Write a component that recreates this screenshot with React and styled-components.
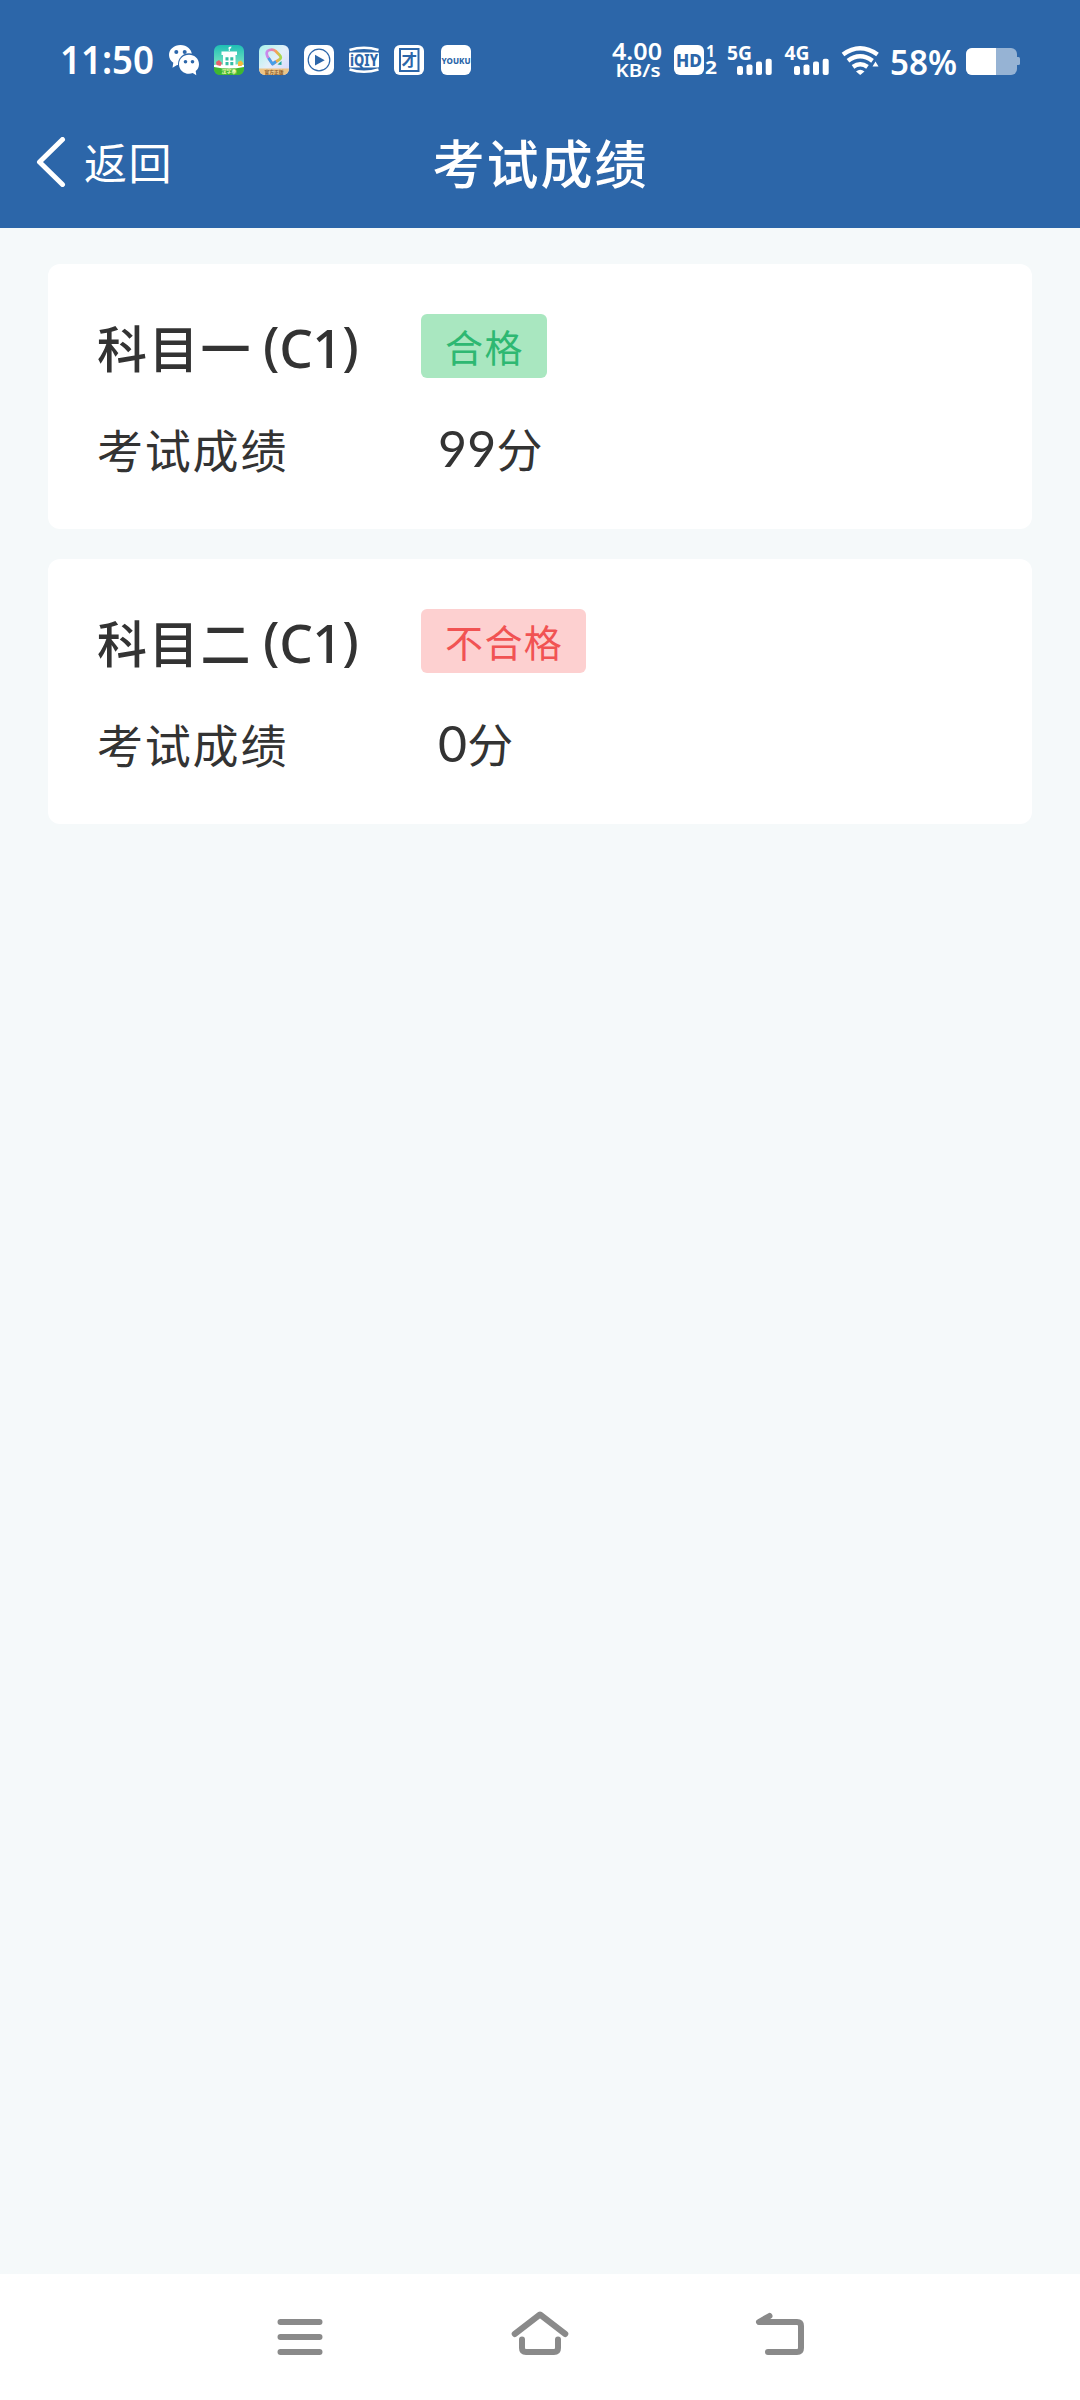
import React from 'react'
import styled, { createGlobalStyle } from 'styled-components'

const CJK = '"Noto Sans CJK SC", "Noto Sans", sans-serif'
const LATIN = '"Noto Sans", "Open Sans", sans-serif'

const GlobalStyle = createGlobalStyle`
  body {
    margin: 0;
    background: #f5f9fa;
    font-family: ${CJK};
  }
`

const Screen = styled.div`
  width: 1080px;
  height: 2400px;
  display: flex;
  flex-direction: column;
  background: #f5f9fa;
  overflow: hidden;
`

const Header = styled.header`
  height: 228px;
  background: #2c66a9;
  color: #fff;
`

const StatusBar = styled.div`
  height: 80px;
  padding: 40px 60px 0;
  box-sizing: border-box;
  display: flex;
  justify-content: space-between;
  align-items: flex-start;
`

const StatusSvg = styled.svg`
  display: block;
  height: 40px;
  width: ${props => props.$width}px;
  overflow: visible;
  font-family: ${LATIN};
  fill: #fff;
`

const TitleBar = styled.div`
  height: 148px;
  padding: 0 36px;
  display: grid;
  grid-template-columns: 1fr auto 1fr;
  align-items: start;
`

const BackButton = styled.div`
  display: flex;
  align-items: flex-start;
  gap: 18px;
  padding-top: 57px;
  font-size: 43px;
  line-height: 49px;
  letter-spacing: 1.5px;
`

const Title = styled.h1`
  margin: 0;
  padding: 52px 0 0 1px;
  font-size: 52px;
  font-weight: 500;
  line-height: 60px;
  letter-spacing: 2px;
`

const Content = styled.main`
  flex: 1;
  padding: 36px 48px;
  display: flex;
  flex-direction: column;
  gap: 30px;
`

const Card = styled.section`
  height: 265px;
  padding: 50px 48px 0 49px;
  box-sizing: border-box;
  border-radius: 12px;
  background: #fff;
  color: #333;
`

const CardHead = styled.div`
  display: flex;
  height: 64px;
  line-height: 64px;
`

const Subject = styled.h2`
  width: 324px;
  margin: 0;
  font-size: 50px;
  font-weight: 500;
  line-height: 65px;
  letter-spacing: 1.7px;
  white-space: nowrap;
`

const Licence = styled.span`
  margin-left: 11px;
  font-family: ${LATIN};
  font-size: 53px;
  line-height: 1;
  letter-spacing: -0.5px;
`

const Paren = styled.span`
  line-height: 1;
  vertical-align: 3px;
`

const Badge = styled.span`
  padding: 0 23px 0 24px;
  border-radius: 6px;
  font-size: 38px;
  letter-spacing: 1.4px;
  color: ${props => (props.$passed ? '#2eb872' : '#f15353')};
  background: ${props => (props.$passed ? '#a9e7c0' : '#fdd0d0')};
`

const ScoreRow = styled.div`
  display: flex;
  margin-top: 36px;
  font-size: 46px;
  line-height: 68px;
  letter-spacing: 1.8px;
`

const ScoreLabel = styled.span`
  width: 341px;
`

const Score = styled.span`
  padding-top: 2px;
  font-family: Lato, ${CJK};
`

const Digits = styled.span`
  font-size: 50px;
  line-height: 1;
  letter-spacing: 0.2px;
`

const NavBar = styled.nav`
  height: 126px;
  display: grid;
  grid-template-columns: repeat(3, 240px);
  justify-content: center;
  background: #fff;
`

const NavIcon = styled.svg`
  width: 240px;
  height: 126px;
  fill: none;
  stroke: #8a8a8a;
  stroke-width: 6;
  stroke-linecap: round;
  stroke-linejoin: round;
`

const results = [
  { subject: '科目一', licence: 'C1', passed: true, score: 99 },
  { subject: '科目二', licence: 'C1', passed: false, score: 0 },
]

// text squeezed or stretched to an exact width
const FitText = ({ width, children, ...props }) => (
  <text textLength={width} lengthAdjust="spacingAndGlyphs" {...props}>
    {children}
  </text>
)

const Notifications = () => (
  <StatusSvg $width={420} viewBox="60 40 420 40">
    <defs>
      <linearGradient id="shop" x1="0" y1="0" x2="0" y2="1">
        <stop offset="0" stopColor="#1fbfb4" />
        <stop offset="0.6" stopColor="#6fe0c0" />
        <stop offset="1" stopColor="#35b537" />
      </linearGradient>
      <linearGradient id="pastel" x1="0" y1="0" x2="1" y2="1">
        <stop offset="0" stopColor="#a9f3ea" />
        <stop offset="0.5" stopColor="#e4effa" />
        <stop offset="1" stopColor="#d7d6fb" />
      </linearGradient>
      <linearGradient id="rainbow" x1="1" y1="0.6" x2="0" y2="0.6">
        <stop offset="0" stopColor="#a5da50" />
        <stop offset="0.3" stopColor="#f5a64e" />
        <stop offset="0.6" stopColor="#e87fb0" />
        <stop offset="1" stopColor="#c78af0" />
      </linearGradient>
    </defs>

    <FitText x="60" y="74" fontSize="40" fontWeight="600" width="94">11:50</FitText>

    {/* wechat */}
    <path d="M180.500 45c-6.500 0-11.500 4.400-11.500 10 0 3.200 1.700 6 4.300 7.800l-.8 5 4.600-2.800c1 .2 2 .4 3 .4 6.500 0 11.800-4.600 11.800-10.300S187 45 180.500 45z" />
    <circle cx="189" cy="64.300" r="11" fill="#2c66a9" />
    <path d="M189 54.800c-5.600 0-10 4-10 9.400s4.400 9.600 10 9.600c1.400 0 2.600-.2 3.700-.7l3.600 2.200-.6-4.200c2-1.600 3.300-4 3.300-6.900 0-5.400-4.400-9.400-10-9.400z" />
    <g fill="#2c66a9">
      <circle cx="176.300" cy="52" r="2" />
      <circle cx="184.700" cy="52" r="2" />
      <circle cx="185.500" cy="61.800" r="1.800" />
      <circle cx="192.500" cy="61.800" r="1.800" />
    </g>

    {/* shop */}
    <rect x="214" y="45" width="30" height="30" rx="6" fill="url(#shop)" />
    <path d="M214 65q7-2 15 1 8-3 15-1v4h-30z" fill="#fff" />
    <path d="M216 62l3-2 3 3-1.500 3-4-1z" fill="#e9606b" />
    <path d="M238 62l3-1.500 2.500 3-2 2.500h-3.500z" fill="#f5b83d" />
    <path d="M221.500 51.500h15.500v3.500h-1.500v11h-12.500V55h-1.500z" />
    <path d="M225.500 57.200h3v3.300h-3zM230.300 57.200h3v3.300h-3zM225.500 62h3v3.300h-3zM230.300 62h3v3.300h-3z" fill="#35bda5" />
    <path d="M229.300 51v-2.500" stroke="#fff" />
    <path d="M228.500 48.800q-.5-2.300 3-2.300 0 3-3 2.300z" />
    <path d="M214 67q15 3 30 0v2a6 6 0 0 1-6 6h-18a6 6 0 0 1-6-6z" fill="#3fb730" />
    <FitText x="221.500" y="73" fontSize="5" fontWeight="700" fontFamily={CJK} fill="#f4fbb5" width="15">汉字季</FitText>

    {/* pastel badge */}
    <rect x="259" y="45" width="30" height="30" rx="6" fill="url(#pastel)" />
    <path
      d="M272.500 64l-5-7.500q-2.500-5 2-6.500 3.500-1 6 1l4 4q2.500 2.500 0 4.500z"
      fill="none"
      stroke="url(#rainbow)"
      strokeWidth="2.800"
      strokeLinejoin="round"
    />
    <path d="M268.500 58l4 6 3.500-2.500" fill="none" stroke="#459fe8" strokeWidth="2.800" strokeLinejoin="round" />
    <path d="M277.500 64.500l4-3.500v4z" fill="#1fa79c" />
    <path d="M259 68.500h30v.5a6 6 0 0 1-6 6h-18a6 6 0 0 1-6-6z" fill="#ecc486" />
    <FitText x="264.500" y="73.500" fontSize="5" fontWeight="700" fontFamily={CJK} fill="#8a5a2a" width="19">官方正版</FitText>

    {/* player */}
    <rect x="304" y="45" width="30" height="30" rx="7" />
    <circle cx="319" cy="60" r="10.800" fill="none" stroke="#2c66a9" strokeWidth="1.200" />
    <path d="M315 54.800l9.700 5.400-9.700 5.400z" fill="#2c66a9" />

    {/* iqiyi */}
    <path d="M349.500 50q14.500-4.500 29 0M349.500 69.500q14.500 4.500 29 0" fill="none" stroke="#fff" strokeWidth="2.400" />
    <rect x="349" y="52.500" width="30" height="15" rx="1" />
    <FitText x="350" y="66" fontSize="16.500" fontWeight="800" fill="#2c66a9" width="28">iQIY</FitText>

    {/* group buying */}
    <rect x="394" y="45" width="30" height="30" rx="6" />
    <rect x="400" y="49" width="18.500" height="22" fill="none" stroke="#2c66a9" strokeWidth="2" />
    <text x="401.500" y="65.500" fontSize="15.500" fontWeight="700" fontFamily={CJK} fill="#2c66a9">才</text>

    {/* youku */}
    <rect x="441" y="45" width="30" height="30" rx="6" />
    <FitText x="441.500" y="63.500" fontSize="9.500" fontWeight="800" fill="#2c66a9" width="29">YOUKU</FitText>
  </StatusSvg>
)

const SignalBars = ({ x }) => (
  <g>
    <rect x={x} y="66" width="6" height="9" rx="2" />
    <rect x={x + 9.5} y="64.500" width="6" height="10.500" rx="2" />
    <rect x={x + 19} y="61.500" width="6" height="13.500" rx="2" />
    <rect x={x + 28.7} y="58.700" width="6" height="16.300" rx="2" />
  </g>
)

const SystemStatus = () => (
  <StatusSvg $width={408} viewBox="612 40 408 40">
    <FitText x="612" y="59.500" fontSize="23" fontWeight="600" width="50">4.00</FitText>
    <FitText x="615.500" y="76.500" fontSize="18.500" fontWeight="600" width="45">KB/s</FitText>

    <rect x="674" y="45" width="30" height="30" rx="6" />
    <FitText x="676" y="66.500" fontSize="18" fontWeight="800" fill="#2c66a9" width="26">HD</FitText>
    <text x="706" y="56.500" fontSize="15.500" fontWeight="700">1</text>
    <FitText x="705" y="74" fontSize="17" fontWeight="700" width="12">2</FitText>

    <FitText x="727" y="59.500" fontSize="20" fontWeight="700" width="25">5G</FitText>
    <SignalBars x={737} />
    <FitText x="784.500" y="59.500" fontSize="20" fontWeight="700" width="25">4G</FitText>
    <SignalBars x={794} />

    <g fill="none" stroke="#fff" strokeWidth="4.500">
      <path d="M843 54.500q17-12.500 34.500 0" />
      <path d="M848 60.800q12-9 24.500 0" />
      <path d="M853 66.800q7.200-5 14.500 0" />
    </g>
    <path d="M856 71.500q4.200-3.500 8.500 0L860.200 75z" />
    <path d="M875.500 61.500l3 5h-6z" />

    <FitText x="890" y="74.500" fontSize="33.500" fontWeight="600" width="67">58%</FitText>

    <rect x="966" y="48" width="51" height="27" rx="6" fillOpacity="0.500" />
    <path d="M1017 57h1.500q1.500 0 1.500 1.500v5q0 1.500-1.500 1.500h-1.500z" fillOpacity="0.500" />
    <path d="M972 48h24v27h-24a6 6 0 0 1-6-6V54a6 6 0 0 1 6-6z" />
  </StatusSvg>
)

const BackChevron = () => (
  <svg width="30" height="50" viewBox="0 0 30 50">
    <path d="M26.500 2.500L3.500 25l23 22.500" fill="none" stroke="#fff" strokeWidth="5" strokeLinecap="round" strokeLinejoin="round" />
  </svg>
)

const ResultCard = ({ subject, licence, passed, score }) => (
  <Card>
    <CardHead>
      <Subject>
        {subject}
        <Licence>
          <Paren>(</Paren>
          {licence}
          <Paren>)</Paren>
        </Licence>
      </Subject>
      <Badge $passed={passed}>{passed ? '合格' : '不合格'}</Badge>
    </CardHead>
    <ScoreRow>
      <ScoreLabel>考试成绩</ScoreLabel>
      <Score>
        <Digits>{score}</Digits>分
      </Score>
    </ScoreRow>
  </Card>
)

const App = () => (
  <Screen>
    <GlobalStyle />
    <Header>
      <StatusBar>
        <Notifications />
        <SystemStatus />
      </StatusBar>
      <TitleBar>
        <BackButton>
          <BackChevron />
          返回
        </BackButton>
        <Title>考试成绩</Title>
      </TitleBar>
    </Header>
    <Content>
      {results.map(result => (
        <ResultCard key={result.subject} {...result} />
      ))}
    </Content>
    <NavBar>
      <NavIcon viewBox="0 0 240 126">
        <path d="M100.500 48h39M100.500 63h39M100.500 78h39" />
      </NavIcon>
      <NavIcon viewBox="0 0 240 126">
        <path d="M94.700 60L120 40.500 145.300 60" />
        <path d="M102 65.500V74q0 4 4 4h28q4 0 4-4v-8.500" />
      </NavIcon>
      <NavIcon viewBox="0 0 240 126">
        <path d="M109.500 42l-10.500 6h38q4 0 4 4v22q0 4-4 4h-29" />
      </NavIcon>
    </NavBar>
  </Screen>
)

export default App
